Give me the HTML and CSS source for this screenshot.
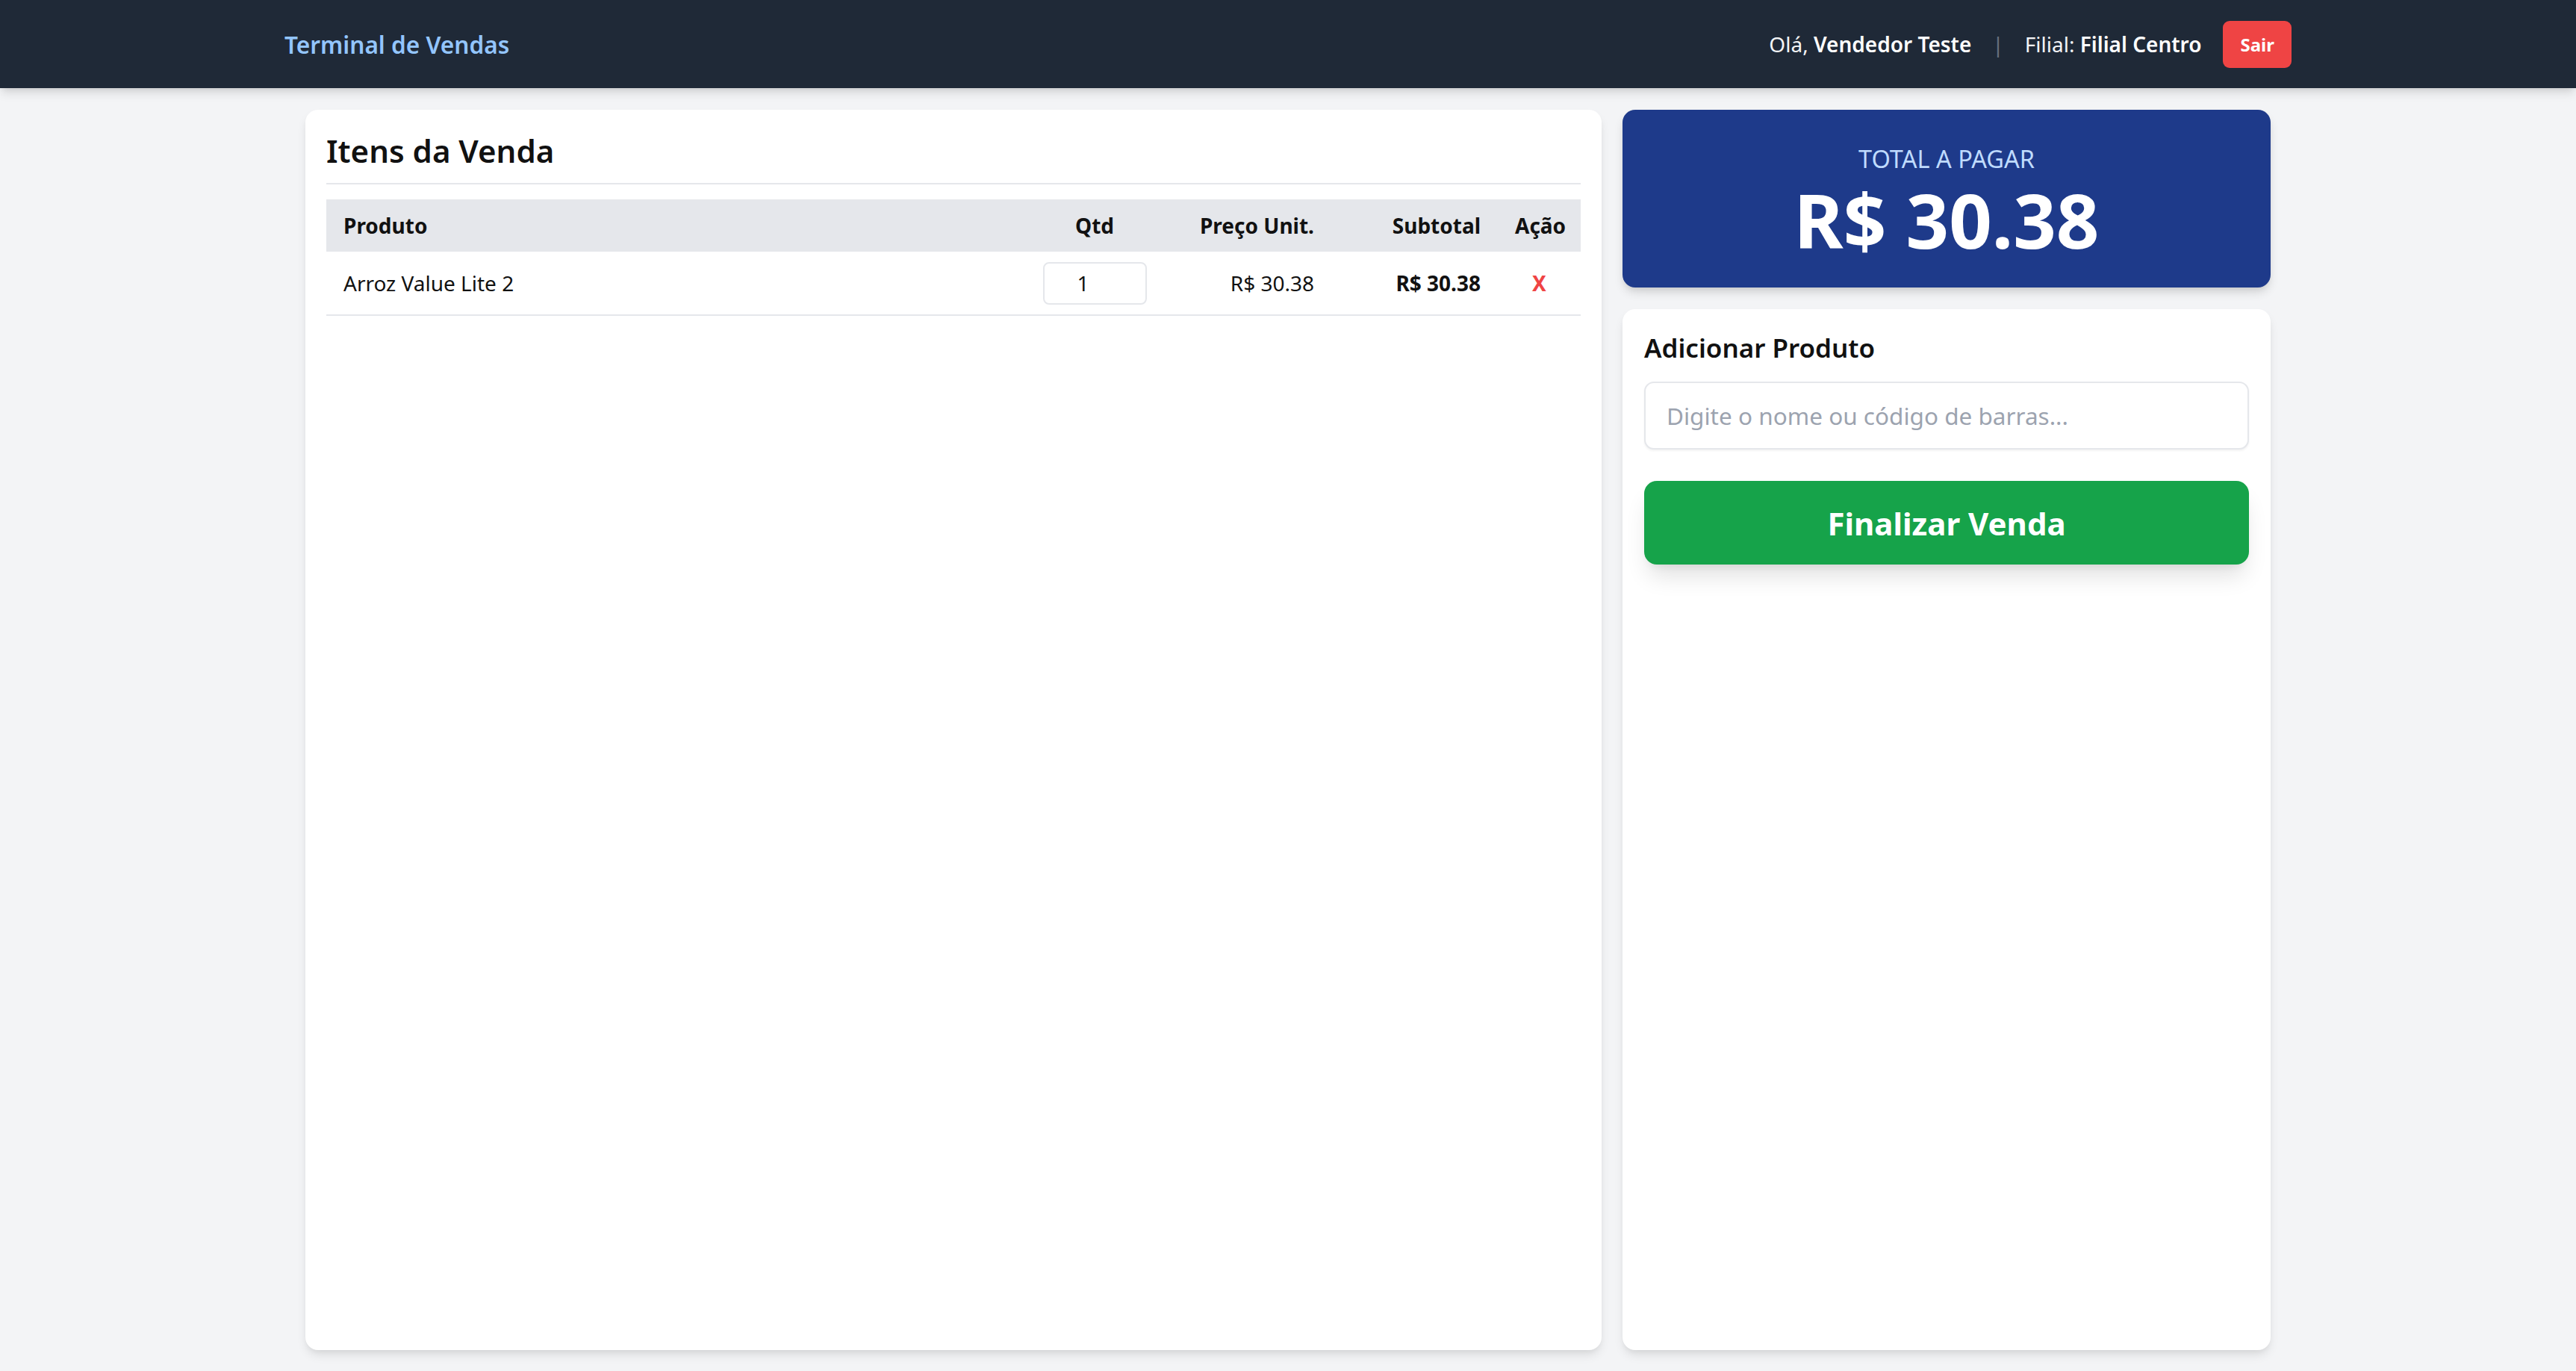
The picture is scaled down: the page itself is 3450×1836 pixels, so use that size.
FILE: index.html
```html
<!DOCTYPE html>
<html lang="pt-BR">
<head>
<meta charset="utf-8">
<title>Terminal de Vendas</title>
<link rel="stylesheet" href="styles.css">
</head>
<body>
<header class="topbar">
  <div class="topbar-inner">
    <div class="brand">Terminal de Vendas</div>
    <div class="user-area">
      <span class="greet">Olá, <strong>Vendedor Teste</strong></span>
      <span class="sep">|</span>
      <span class="branch">Filial: <strong>Filial Centro</strong></span>
      <button class="logout" type="button">Sair</button>
    </div>
  </div>
</header>
<main class="pos">
  <section class="card items">
    <h2 class="card-title">Itens da Venda</h2>
    <table class="items-table">
      <colgroup>
        <col class="c-prod"><col class="c-qtd"><col class="c-price"><col class="c-sub"><col class="c-act">
      </colgroup>
      <thead>
        <tr>
          <th>Produto</th>
          <th class="center">Qtd</th>
          <th class="right">Preço Unit.</th>
          <th class="right">Subtotal</th>
          <th class="center">Ação</th>
        </tr>
      </thead>
      <tbody>
        <tr>
          <td>Arroz Value Lite 2</td>
          <td class="center"><input class="qty" type="text" value="1"></td>
          <td class="right">R$ 30.38</td>
          <td class="right bold">R$ 30.38</td>
          <td class="center"><button class="remove" type="button">X</button></td>
        </tr>
      </tbody>
    </table>
  </section>
  <aside class="side">
    <div class="total-card">
      <div class="total-label">Total a Pagar</div>
      <div class="total-value">R$ 30.38</div>
    </div>
    <div class="card add">
      <h3 class="add-title">Adicionar Produto</h3>
      <input class="search" type="text" placeholder="Digite o nome ou código de barras...">
      <button class="finish" type="button">Finalizar Venda</button>
    </div>
  </aside>
</main>
</body>
</html>
```
FILE: styles.css
```css
html, body {
  margin: 0;
  padding: 0;
}
body {
  background: #f3f4f6;
  font-family: "Noto Sans", "Open Sans", sans-serif;
  color: #111;
  overflow: hidden;
}
.topbar {
  height: 118px;
  background: #1f2937;
  box-shadow: 0 8px 13px -2px rgba(0,0,0,0.12), 0 4px 8px -4px rgba(0,0,0,0.1);
  position: relative;
  z-index: 1;
}
.topbar-inner {
  width: 2688px;
  height: 100%;
  margin: 0 auto;
  display: flex;
  align-items: center;
  justify-content: space-between;
}
.brand {
  font-size: 31.6px;
  font-weight: 600;
  color: #93c5fd;
}
.user-area {
  display: flex;
  align-items: center;
  font-size: 28px;
  color: #f3f4f6;
}
.user-area strong {
  color: #fff;
  font-weight: 600;
}
.sep {
  margin: 0 28px;
  color: #6b7280;
}
.logout {
  margin-left: 29px;
  height: 63px;
  padding: 0 23px;
  border: none;
  border-radius: 9px;
  background: #ef4444;
  color: #fff;
  font-family: inherit;
  font-size: 24px;
  font-weight: 700;
}
.pos {
  width: 2632px;
  margin: 0 auto;
  height: calc(100vh - 118px);
  box-sizing: border-box;
  padding: 29px 0 28px;
  display: flex;
  gap: 28px;
}
.card {
  background: #fff;
  border-radius: 17px;
  box-shadow: 0 8px 14px -2px rgba(0,0,0,0.1), 0 4px 8px -4px rgba(0,0,0,0.08);
}
.items {
  flex: none;
  width: 1736px;
  box-sizing: border-box;
  padding: 26px 28px;
}
.card-title {
  margin: 0 0 20px;
  font-size: 42px;
  line-height: 58.8px;
  font-weight: 600;
  padding-bottom: 13px;
  border-bottom: 2px solid #e5e7eb;
}
.items-table {
  width: 100%;
  border-collapse: collapse;
  table-layout: fixed;
  font-size: 28px;
  line-height: 42px;
}
.c-prod { width: 936px; }
.c-qtd { width: 186px; }
.c-price { width: 224px; }
.c-sub { width: 223px; }
.c-act { width: 111px; }
.items-table th {
  background: #e5e7eb;
  padding: 14px 23px;
  font-weight: 700;
  text-align: left;
}
.items-table td {
  padding: 14px 23px 13px;
  vertical-align: middle;
  border-bottom: 2px solid #e5e7eb;
}
.items-table .center { text-align: center; }
.items-table .right { text-align: right; }
.items-table .bold { font-weight: 700; }
.qty {
  width: 139px;
  height: 57px;
  box-sizing: border-box;
  border: 2px solid #e5e7eb;
  border-radius: 8px;
  padding: 0 31px 0 0;
  text-align: center;
  font-family: inherit;
  font-size: 28px;
  color: #111;
  background: #fff;
  vertical-align: middle;
}
.remove {
  border: none;
  background: none;
  padding: 0;
  font-family: inherit;
  font-size: 28px;
  line-height: 42px;
  font-weight: 700;
  color: #ef4444;
}
.side {
  flex: none;
  width: 868px;
  display: flex;
  flex-direction: column;
  gap: 29px;
}
.total-card {
  background: #1e3a8a;
  border-radius: 17px;
  box-shadow: 0 8px 14px -2px rgba(0,0,0,0.14), 0 4px 8px -4px rgba(0,0,0,0.1);
  text-align: center;
  padding: 45px 0 30px;
}
.total-label {
  font-size: 32.5px;
  line-height: 42px;
  text-transform: uppercase;
  color: #bfdbfe;
}
.total-value {
  font-size: 100.8px;
  line-height: 121px;
  font-weight: 700;
  color: #fff;
}
.add {
  flex: 1 1 auto;
  padding: 28px 29px;
  display: flex;
  flex-direction: column;
}
.add-title {
  margin: 0 0 22px;
  font-size: 35px;
  line-height: 47px;
  font-weight: 600;
}
.search {
  height: 91px;
  box-sizing: border-box;
  border: 2px solid #e5e7eb;
  border-radius: 13px;
  padding: 0 28px;
  font-family: inherit;
  font-size: 31.5px;
  color: #111;
  box-shadow: 0 2px 3px rgba(0,0,0,0.05);
}
.search::placeholder {
  color: #9ca3af;
}
.finish {
  margin-top: 42px;
  height: 112px;
  border: none;
  border-radius: 17px;
  background: #16a34a;
  color: #fff;
  font-family: inherit;
  font-size: 42px;
  font-weight: 700;
  box-shadow: 0 21px 31px -6px rgba(0,0,0,0.12), 0 8px 13px -8px rgba(0,0,0,0.1);
}
```
